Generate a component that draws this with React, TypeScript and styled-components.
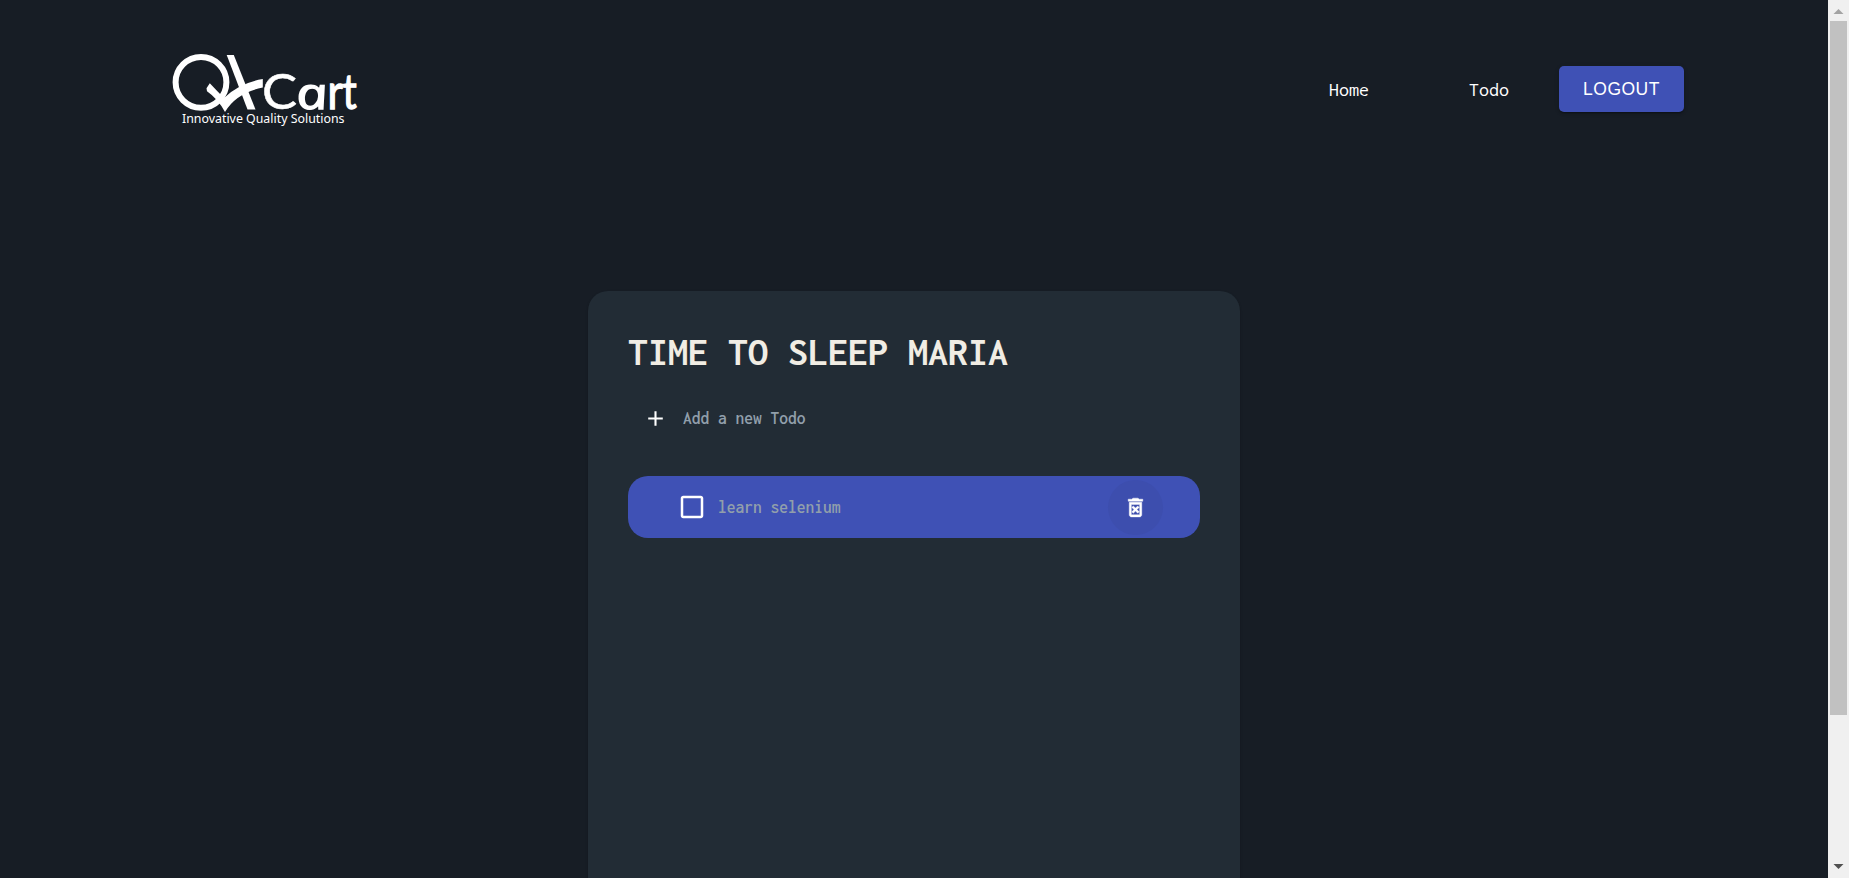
import React from "react";
import styled, { createGlobalStyle } from "styled-components";

const mono = `"Inconsolata", "DejaVu Sans Mono", monospace`;

const GlobalStyle = createGlobalStyle`
  *, *::before, *::after { box-sizing: border-box; }
  body { margin: 0; overflow: hidden; background: #171d25; }
`;

const Viewport = styled.div`
  display: flex;
  height: 878px;
  overflow: hidden;
  background: #171d25;
  font-family: ${mono};
`;

const Page = styled.div`
  flex: 1;
  min-width: 0;
  height: 100%;
  overflow: hidden;
  display: flex;
  flex-direction: column;
  align-items: center;
`;

const Header = styled.header`
  width: 100%;
  height: 291px;
  flex: none;
  padding: 40px 144px 0 160px;
  display: flex;
  justify-content: space-between;
  align-items: flex-start;
`;

const Nav = styled.nav`
  display: flex;
  align-items: center;
  gap: 50px;
  margin-top: 26px;
`;

const Links = styled.div`
  display: flex;
  gap: 100px;
`;

const NavLink = styled.a`
  width: 40px;
  color: #fff;
  font-size: 20px;
  line-height: 24px;
  white-space: nowrap;
  text-decoration: none;
  padding-top: 1px;
`;

const Button = styled.button`
  width: 125px;
  height: 46px;
  border: 0;
  border-radius: 5px;
  padding: 0;
  background: #3f51b5;
  color: #fff;
  font: 400 17.5px/30px "Liberation Sans", Arial, sans-serif;
  letter-spacing: 0.5px;
  box-shadow: 0 3px 1px -2px rgba(0, 0, 0, 0.2), 0 2px 2px 0 rgba(0, 0, 0, 0.14),
    0 1px 5px 0 rgba(0, 0, 0, 0.12);
`;

const Card = styled.main`
  width: 652px;
  height: 800px;
  flex: none;
  padding: 39px 40px 40px;
  border-radius: 20px;
  background: #222c35;
  box-shadow: 0 2px 1px -1px rgba(0, 0, 0, 0.2), 0 1px 1px 0 rgba(0, 0, 0, 0.14),
    0 1px 3px 0 rgba(0, 0, 0, 0.12);
`;

const Title = styled.h1`
  margin: 0;
  height: 44px;
  color: #f1ede4;
  font-size: 40px;
  font-weight: 700;
  line-height: 44px;
  white-space: pre;
`;

const AddRow = styled.div`
  display: flex;
  align-items: center;
  height: 40px;
  margin-top: 24px;
  padding-left: 15px;
  gap: 15px;
`;

const Label = styled.span`
  color: #919fab;
  font-size: 19px;
  font-weight: 600;
  line-height: 24px;
  white-space: pre;
  transform: scaleX(0.921);
  transform-origin: left center;
`;

const TodoItem = styled.div`
  display: flex;
  align-items: center;
  height: 62px;
  margin-top: 38px;
  padding: 0 37px 0 49px;
  border-radius: 20px;
  background: #3f51b5;
  ${Label} {
    flex: 1;
    margin-left: 11px;
  }
`;

const DeleteButton = styled.button`
  display: flex;
  align-items: center;
  justify-content: center;
  width: 55px;
  height: 55px;
  padding: 0;
  border: 0;
  border-radius: 50%;
  background: #3d4eae;
`;

const Scrollbar = styled.div`
  flex: none;
  width: 21px;
  height: 100%;
  display: flex;
  flex-direction: column;
  align-items: center;
  background: #f0f0f0;
`;

const ScrollArrow = styled.div<{ $down?: boolean }>`
  width: 21px;
  height: 21px;
  display: flex;
  svg { transform: ${(p) => (p.$down ? "scaleY(-1)" : "none")}; }
  color: ${(p) => (p.$down ? "#505050" : "#a3a3a3")};
`;

const Track = styled.div`
  flex: 1;
  width: 17px;
`;

const Thumb = styled.div`
  height: 694px;
  background: #c1c1c1;
`;

const Icon = ({ size, d, weight = 0 }: { size: number; d: string; weight?: number }) => (
  <svg width={size} height={size} viewBox="0 0 24 24" fill="#fff" stroke="#fff" strokeWidth={weight}>
    <path d={d} />
  </svg>
);

const Arrow = () => (
  <svg width="21" height="21" fill="currentColor">
    <path d="M10.5 9L15.5 14H5.5Z" />
  </svg>
);

const Logo = () => (
  <svg width="210" height="100" fill="#fff">
    <circle cx="41" cy="42.3" r="25.4" fill="none" stroke="#fff" strokeWidth="6" />
    <path d="M66.7 15H73.8L95.5 69.5H87.5Z" />
    <path d="M49.8 43.3L46.5 48.2L47 51.3Q58 59 65 72Q76 53 102.8 47.5V39Q79 43 64 58Q57 51 49.8 43.3Z" />
    <g fontFamily="Lato, sans-serif" fontSize="49" stroke="#fff">
      <text transform="translate(102 69.3) scale(1.07 1)" strokeWidth="0.5">C</text>
      <g strokeWidth="1.3">
        <text
          transform="translate(138.8 69.3) skewX(12) scale(1.26 1)"
          fontFamily="Open Sans, sans-serif"
          fontStyle="italic"
          fontSize="44"
        >
          a
        </text>
        <text transform="translate(167.5 69.3) scale(0.87 1)">r</text>
        <text transform="translate(182.5 69.3) scale(0.81 1)">t</text>
      </g>
    </g>
    <text x="22" y="83.3" fontFamily="Noto Sans, sans-serif" fontSize="13" textLength="162.5" lengthAdjust="spacingAndGlyphs">
      Innovative Quality Solutions
    </text>
  </svg>
);

export default function App() {
  return (
    <>
      <GlobalStyle />
      <Viewport>
        <Page>
          <Header>
            <Logo />
            <Nav>
              <Links>
                <NavLink>Home</NavLink>
                <NavLink>Todo</NavLink>
              </Links>
              <Button>LOGOUT</Button>
            </Nav>
          </Header>
          <Card>
            <Title>TIME TO SLEEP MARIA</Title>
            <AddRow>
              <Icon size={25} d="M19 13h-6v6h-2v-6H5v-2h6V5h2v6h6v2z" />
              <Label>Add a new Todo</Label>
            </AddRow>
            <TodoItem>
              <Icon
                size={30}
                d="M19 5v14H5V5h14m0-2H5c-1.1 0-2 .9-2 2v14c0 1.1.9 2 2 2h14c1.1 0 2-.9 2-2V5c0-1.1-.9-2-2-2z"
              />
              <Label>learn selenium</Label>
              <DeleteButton aria-label="Delete">
                <Icon
                  size={25}
                  weight={0.4}
                  d="M14.12 10.47L12 12.59l-2.13-2.12-1.41 1.41L10.59 14l-2.12 2.12 1.41 1.41L12 15.41l2.12 2.12 1.41-1.41L13.41 14l2.12-2.12zM15.5 4l-1-1h-5l-1 1H5v2h14V4zM6 19c0 1.1.9 2 2 2h8c1.1 0 2-.9 2-2V7H6v12zM8 9h8v10H8V9z"
                />
              </DeleteButton>
            </TodoItem>
          </Card>
        </Page>
        <Scrollbar>
          <ScrollArrow><Arrow /></ScrollArrow>
          <Track><Thumb /></Track>
          <ScrollArrow $down><Arrow /></ScrollArrow>
        </Scrollbar>
      </Viewport>
    </>
  );
}
